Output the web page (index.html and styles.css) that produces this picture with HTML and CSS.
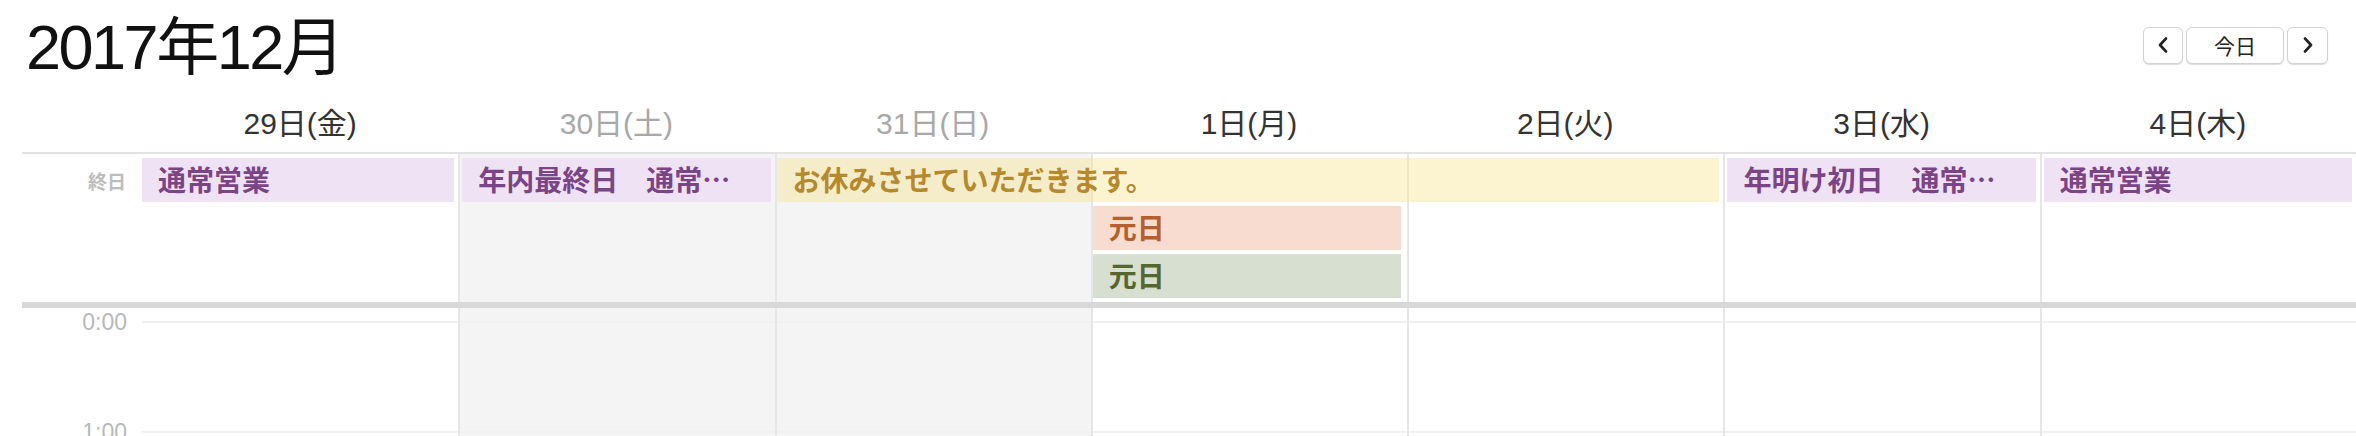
FILE: index.html
```html
<!DOCTYPE html>
<html lang="ja">
<head>
<meta charset="utf-8">
<title>2017年12月</title>
<link rel="stylesheet" href="styles.css">
</head>
<body>
<div class="cal">
  <div class="toolbar">
    <h1 class="title">2017年12月</h1>
    <div class="nav">
      <button class="btn btn-prev" aria-label="前へ">
        <svg width="10" height="16" viewBox="0 0 10 16"><polyline points="8,1.5 2,8 8,14.5" fill="none" stroke="#222" stroke-width="2.6" stroke-linecap="round" stroke-linejoin="round"/></svg>
      </button>
      <button class="btn btn-today">今日</button>
      <button class="btn btn-next" aria-label="次へ">
        <svg width="10" height="16" viewBox="0 0 10 16"><polyline points="2,1.5 8,8 2,14.5" fill="none" stroke="#222" stroke-width="2.6" stroke-linecap="round" stroke-linejoin="round"/></svg>
      </button>
    </div>
  </div>

  <div class="grid head">
    <div class="gutter"></div>
    <div class="dayname">29日(金)</div>
    <div class="dayname weekend">30日(土)</div>
    <div class="dayname weekend">31日(日)</div>
    <div class="dayname">1日(月)</div>
    <div class="dayname">2日(火)</div>
    <div class="dayname">3日(水)</div>
    <div class="dayname">4日(木)</div>
  </div>

  <div class="grid allday">
    <div class="allday-label">終日</div>
    <div class="col d1 first"></div>
    <div class="col d2 weekend"></div>
    <div class="col d3 weekend"></div>
    <div class="col d4"></div>
    <div class="col d5"></div>
    <div class="col d6"></div>
    <div class="col d7"></div>

    <div class="ev purple d1 r1 first">通常営業</div>
    <div class="ev purple d2 r1">年内最終日　通常…</div>
    <div class="ev yellow d3 r1 span3">お休みさせていただきます。</div>
    <div class="ev orange d4 r2 tight">元日</div>
    <div class="ev green d4 r3 tight">元日</div>
    <div class="ev purple d6 r1">年明け初日　通常…</div>
    <div class="ev purple d7 r1">通常営業</div>
  </div>

  <div class="grid timed">
    <div class="times">
      <div class="time">0:00</div>
      <div class="time">1:00</div>
      <div class="time">2:00</div>
    </div>
    <div class="tcol d1 first"></div>
    <div class="tcol d2 weekend"></div>
    <div class="tcol d3 weekend"></div>
    <div class="tcol d4"></div>
    <div class="tcol d5"></div>
    <div class="tcol d6"></div>
    <div class="tcol d7"></div>
  </div>
</div>
</body>
</html>
```

FILE: styles.css
```css
html, body {
  margin: 0;
  padding: 0;
  background: #fff;
}

body {
  width: 2356px;
  height: 436px;
  overflow: hidden;
  font-family: "Liberation Sans", "Noto Sans CJK JP", sans-serif;
  color: #222;
}

.cal {
  padding-left: 22px;
}

/* toolbar */
.toolbar {
  display: flex;
  align-items: center;
  justify-content: space-between;
  height: 90px;
  padding-right: 28px;
}

.title {
  margin: 4px 0 0 4px;
  font-size: 63px;
  font-weight: normal;
  line-height: 1;
  letter-spacing: -2.5px;
  color: #111;
}

.nav {
  display: flex;
  gap: 3px;
}

.btn {
  display: flex;
  align-items: center;
  justify-content: center;
  height: 37px;
  padding: 0;
  border: 1px solid #d2d2d2;
  border-radius: 6px;
  background: #fff;
  box-shadow: 0 1px 1px rgba(0, 0, 0, 0.14);
  font-family: "Noto Sans CJK JP", sans-serif;
  font-size: 21px;
  color: #222;
}

.btn-prev { width: 40px; }
.btn-today { width: 98px; }
.btn-next { width: 41px; }

/* shared grid */
.grid {
  display: grid;
  grid-template-columns: 120px repeat(7, 1fr);
}

.d1 { grid-column: 2; }
.d2 { grid-column: 3; }
.d3 { grid-column: 4; }
.d4 { grid-column: 5; }
.d5 { grid-column: 6; }
.d6 { grid-column: 7; }
.d7 { grid-column: 8; }

/* header */
.head {
  height: 62px;
  align-items: center;
  border-bottom: 2px solid #e3e3e3;
}

.dayname {
  text-align: center;
  font-size: 30px;
  color: #333;
}

.dayname.weekend {
  color: #a8a8a8;
}

/* all day */
.allday {
  grid-template-rows: 48px 48px 52px;
}

.allday-label {
  grid-column: 1;
  grid-row: 1;
  align-self: center;
  margin-top: 4px;
  padding-right: 16px;
  text-align: right;
  font-family: "Noto Sans CJK JP", sans-serif;
  font-weight: bold;
  font-size: 19px;
  color: #bcbcbc;
}

.col {
  grid-row: 1 / -1;
  border-left: 2px solid #e6e6e6;
}

.col.first,
.tcol.first {
  border-left-color: transparent;
}

.col.weekend,
.tcol.weekend {
  background-color: #f4f4f4;
}

.ev {
  margin: 4px 4px 0 4px;
  height: 44px;
  padding-left: 16px;
  line-height: 42px;
  font-family: "Noto Sans CJK JP", sans-serif;
  font-weight: bold;
  font-size: 28px;
  white-space: nowrap;
  overflow: hidden;
}

.ev.first { margin-left: 0; }
.ev.tight { margin-left: 2px; margin-right: 6px; }
.ev.span3 { margin-left: 2px; }

.r1 { grid-row: 1; }
.r2 { grid-row: 2; }
.r3 { grid-row: 3; }
.span3 { grid-column-end: span 3; }

.purple {
  background: #efe2f4;
  color: #7a4486;
}

.yellow {
  background: rgba(248, 228, 140, 0.4);
  color: #b5892c;
}

.orange {
  background: #f8dcd0;
  color: #b5602c;
}

.green {
  background: #d7e0d0;
  color: #55662f;
}

/* timed */
.timed {
  border-top: 6px solid #d8d8d8;
  height: 340px;
}

.times {
  grid-column: 1;
  grid-row: 1;
  display: flex;
  flex-direction: column;
  gap: 86px;
  padding: 2px 15px 0 0;
}

.time {
  height: 24px;
  line-height: 24px;
  text-align: right;
  font-size: 23px;
  color: #b8b8b8;
}

.tcol {
  grid-row: 1;
  border-left: 2px solid #e6e6e6;
  background-image: repeating-linear-gradient(
    to bottom,
    transparent 0,
    transparent 13px,
    #f1f1f1 13px,
    #f1f1f1 15px,
    transparent 15px,
    transparent 110px
  );
}
```
